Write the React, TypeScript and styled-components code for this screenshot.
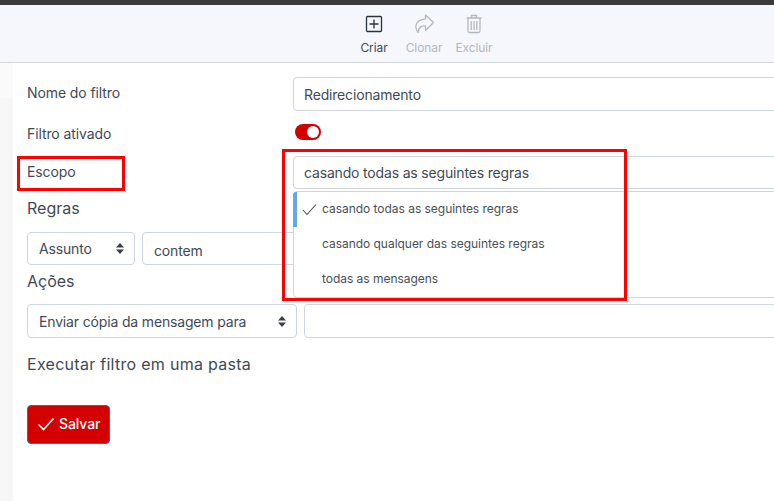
import styled, { createGlobalStyle } from "styled-components";
import { useState } from "react";

const GlobalStyle = createGlobalStyle`
   html, body {
      margin: 0;
      height: 100%;
      overflow: hidden;
      background: #fff;
   }
   body {
      font-family: "Inter", "Noto Sans", sans-serif;
      color: #3f4a56;
   }
`;

const Shell = styled.div`
   position: relative;
   width: 774px;
   height: 501px;
   overflow: hidden;
   display: flex;
   flex-direction: column;
`;

const TopBar = styled.div`
   flex: none;
   height: 5px;
   background: #3c3c3c;
`;

// Barra de ações: o grupo fica um pouco à direita do centro
const Toolbar = styled.div`
   flex: none;
   height: 58px;
   box-sizing: border-box;
   background: #f5f7fc;
   border-bottom: 1px solid #d3d8de;
   display: flex;
   justify-content: center;
   align-items: flex-start;
   gap: 3px;
   padding: 9px 0 0 74px;
`;

const ToolButton = styled.div<{ $disabled?: boolean }>`
   width: 47px;
   display: flex;
   flex-direction: column;
   align-items: center;
   font-size: 12px;
   line-height: 15px;
   letter-spacing: -0.1px;
   color: ${({ $disabled }) => ($disabled ? "#b4b8bd" : "#3f4a56")};
   svg {
      display: block;
      margin-bottom: 6px;
   }
`;

const Body = styled.div`
   flex: 1;
   display: flex;
   min-height: 0;
`;

const Sidebar = styled.div`
   width: 13px;
   background: linear-gradient(#fafafa 35px, #f7f7f7 35px);
`;

const Form = styled.div`
   flex: 1;
   min-width: 0;
   padding: 14px 0 0 14px;
   display: flex;
   flex-direction: column;
`;

const FieldRow = styled.div<{ $height: number; $mb?: number }>`
   display: grid;
   grid-template-columns: 266px 560px;
   align-items: start;
   height: ${({ $height }) => $height}px;
   margin-bottom: ${({ $mb }) => $mb ?? 0}px;
`;

const Label = styled.div`
   font-size: 14px;
   line-height: 32px;
   letter-spacing: -0.1px;
`;

const Input = styled.div<{ $height: number }>`
   box-sizing: border-box;
   height: ${({ $height }) => $height}px;
   border: 1px solid #cfd5dc;
   border-radius: 4px;
   padding: 0 10px;
   font-size: 14px;
   line-height: ${({ $height }) => $height - 1}px;
   letter-spacing: -0.17px;
   background: #fff;
   white-space: nowrap;
`;

const Toggle = styled.div`
   width: 26px;
   height: 16px;
   border-radius: 8px;
   background: #d40000;
   position: relative;
   margin: 6px 0 0 2px;
   &::after {
      content: "";
      position: absolute;
      right: 2px;
      top: 2px;
      width: 12px;
      height: 12px;
      border-radius: 50%;
      background: #fff;
   }
`;

const SectionTitle = styled.div<{ $top: number; $bottom: number }>`
   font-size: 16px;
   line-height: 24px;
   margin: ${({ $top, $bottom }) => `${$top}px 0 ${$bottom}px`};
`;

const ExecTitle = styled(SectionTitle)`
   letter-spacing: 0.28px;
`;

const Controls = styled.div`
   display: flex;
   gap: 7px;
   width: 900px;
`;

const SelectBox = styled.div<{ $width: number; $height: number; $plain?: boolean }>`
   box-sizing: border-box;
   flex: none;
   width: ${({ $width }) => $width}px;
   height: ${({ $height }) => $height}px;
   border: 1px solid #cfd5dc;
   border-radius: 4px;
   background: #fff;
   padding: ${({ $plain }) => ($plain ? "3px 10px 0 11px" : "0 10px 0 11px")};
   font-size: 14px;
   letter-spacing: -0.16px;
   display: flex;
   align-items: center;
   justify-content: space-between;
   white-space: nowrap;
`;

const Carets = styled.svg`
   flex: none;
   width: 8px;
   height: 11px;
   fill: #3a3f45;
`;

// Lista aberta do select de escopo, por cima dos campos de regras
const Dropdown = styled.ul`
   position: absolute;
   left: 293px;
   top: 191px;
   width: 560px;
   height: 107px;
   box-sizing: border-box;
   margin: 0;
   padding: 0;
   list-style: none;
   background: #fff;
   border: 1px solid #cfd5dc;
   border-radius: 4px;
`;

const Option = styled.li<{ $active?: boolean }>`
   position: relative;
   height: 35px;
   box-sizing: border-box;
   margin-left: -1px;
   padding-left: 25px;
   font-size: 12px;
   line-height: 33px;
   letter-spacing: -0.03px;
   color: #4a4f55;
   border-left: 4px solid ${({ $active }) => ($active ? "#62a8ee" : "transparent")};
   border-top-left-radius: 3px;
   svg {
      position: absolute;
      left: 5px;
      top: 11px;
   }
`;

const SaveButton = styled.button`
   align-self: flex-start;
   box-sizing: border-box;
   margin-top: 29px;
   width: 83px;
   height: 39px;
   background: #d40000;
   color: #fff;
   border: 1px solid #3a68a8;
   border-radius: 4px;
   font: inherit;
   font-size: 14px;
   font-weight: 500;
   letter-spacing: -0.1px;
   display: flex;
   align-items: center;
   gap: 5px;
   padding: 0 0 2px 10px;
`;

// Marcações vermelhas da captura, sobre o conteúdo
const Highlight = styled.div<{ $x: number; $y: number; $w: number; $h: number }>`
   position: absolute;
   left: ${({ $x }) => $x}px;
   top: ${({ $y }) => $y}px;
   width: ${({ $w }) => $w}px;
   height: ${({ $h }) => $h}px;
   box-sizing: border-box;
   border: 3px solid #ff0000;
   pointer-events: none;
`;

const scopeOptions = [
   "casando todas as seguintes regras",
   "casando qualquer das seguintes regras",
   "todas as mensagens",
];

function SortCarets() {
   return (
      <Carets viewBox="0 0 8 11">
         <path d="M4 0 8 4.400H0zM4 11 0 6.600h8z" />
      </Carets>
   );
}

export default function App() {
   const [selected] = useState(0);

   return (
      <>
         <GlobalStyle />
         <Shell>
            <TopBar />
            <Toolbar>
               <ToolButton>
                  <svg width="20" height="20" viewBox="0 0 20 20" fill="none">
                     <rect x="2.500" y="2.500" width="15" height="15" rx="1" stroke="#2c3440" strokeWidth="1.300" />
                     <path d="M10 5.500v9M5.500 10h9" stroke="#2c3440" strokeWidth="1.300" />
                  </svg>
                  Criar
               </ToolButton>
               <ToolButton $disabled>
                  <svg width="20" height="20" viewBox="0 0 20 20" fill="none">
                     <path
                        d="M11.500 1 19.500 8.500 11.500 16.500V12C8 11.600 4.500 12.500 4.200 18.500 1 15-.5 6 11.500 4.800Z"
                        stroke="#b4b8bd"
                        strokeWidth="1.300"
                        strokeLinejoin="round"
                     />
                  </svg>
                  Clonar
               </ToolButton>
               <ToolButton $disabled>
                  <svg width="20" height="20" viewBox="0 0 20 20" fill="none" stroke="#b4b8bd" strokeWidth="1.300">
                     <path d="M2.500 4h15M7.500 4V1.500h5V4M4 4v13c0 1 .5 1.500 1.500 1.500h9c1 0 1.500-.5 1.500-1.500V4M7.200 7v9M10 7v9M12.800 7v9" />
                  </svg>
                  Excluir
               </ToolButton>
            </Toolbar>
            <Body>
               <Sidebar />
               <Form>
                  <FieldRow $height={34} $mb={7}>
                     <Label>Nome do filtro</Label>
                     <Input $height={34}>Redirecionamento</Input>
                  </FieldRow>
                  <FieldRow $height={30} $mb={8}>
                     <Label>Filtro ativado</Label>
                     <Toggle />
                  </FieldRow>
                  <FieldRow $height={33}>
                     <Label>Escopo</Label>
                     <Input $height={33}>{scopeOptions[selected]}</Input>
                  </FieldRow>
                  <SectionTitle $top={7} $bottom={12}>Regras</SectionTitle>
                  <Controls>
                     <SelectBox $width={108} $height={33}>
                        Assunto
                        <SortCarets />
                     </SelectBox>
                     <SelectBox $width={400} $height={33} $plain>contem</SelectBox>
                  </Controls>
                  <SectionTitle $top={4} $bottom={11}>Ações</SectionTitle>
                  <Controls>
                     <SelectBox $width={270} $height={34}>
                        Enviar cópia da mensagem para
                        <SortCarets />
                     </SelectBox>
                     <SelectBox $width={560} $height={34} />
                  </Controls>
                  <ExecTitle $top={14} $bottom={0}>Executar filtro em uma pasta</ExecTitle>
                  <SaveButton>
                     <svg width="16" height="14" viewBox="0 0 16 14" fill="none">
                        <path d="M.6 7.500 5.500 12.500 15.500 1.500" stroke="#fff" strokeWidth="1.600" />
                     </svg>
                     Salvar
                  </SaveButton>
               </Form>
            </Body>
            <Dropdown>
               {scopeOptions.map((option, i) => (
                  <Option key={option} $active={i === selected}>
                     {i === selected && (
                        <svg width="16" height="13" viewBox="0 0 16 13" fill="none">
                           <path d="M1 7 5 11.500 14 1.500" stroke="#4a4f55" strokeWidth="1.100" />
                        </svg>
                     )}
                     {option}
                  </Option>
               ))}
            </Dropdown>
            <Highlight $x={17} $y={156} $w={108} $h={35} />
            <Highlight $x={282} $y={149} $w={345} $h={152} />
         </Shell>
      </>
   );
}
